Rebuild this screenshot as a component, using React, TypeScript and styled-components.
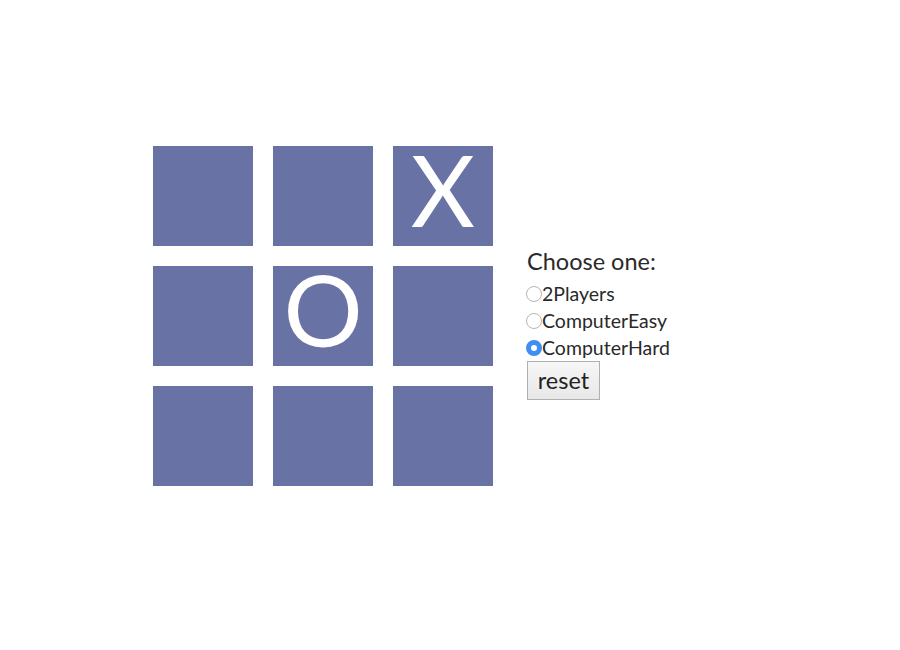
import React, { useState } from 'react';
import styled, { createGlobalStyle } from 'styled-components';

const GlobalStyle = createGlobalStyle`
  body {
    margin: 0;
    background: #ffffff;
    font-family: Lato, "Open Sans", sans-serif;
    color: #222222;
  }
`;

const Page = styled.div`
  display: flex;
  align-items: center;
  padding: 146px 0 0 153px;
`;

const Board = styled.div`
  display: grid;
  grid-template-columns: repeat(3, 100px);
  grid-template-rows: repeat(3, 100px);
  gap: 20px;
`;

const Cell = styled.div`
  background: #6872a5;
  color: #ffffff;
  display: flex;
  align-items: center;
  justify-content: center;
  padding-bottom: 16px;
  box-sizing: border-box;
  font-family: Lato, "Open Sans", sans-serif;
  font-size: 99px;
  font-weight: 400;
  line-height: 1;
`;

const Panel = styled.div`
  display: flex;
  flex-direction: column;
  align-items: flex-start;
  margin: 16px 0 0 34px;
`;

const Title = styled.div`
  font-size: 23.5px;
  line-height: 26px;
  margin-bottom: 6px;
  color: #2a2a2a;
`;

const Option = styled.label`
  display: flex;
  align-items: center;
  font-size: 19.5px;
  height: 27px;
  color: #2a2a2a;
`;

const Radio = styled.input`
  appearance: none;
  margin: 0 0 0 -1px;
  width: 16px;
  height: 16px;
  border-radius: 50%;
  border: 1px solid #b5b5b5;
  background: #ffffff;
  box-sizing: border-box;

  &:checked {
    border: 5px solid #3d8ff2;
    background: #ffffff;
  }
`;

const ResetButton = styled.button`
  margin-top: 0;
  font-family: Lato, "Open Sans", sans-serif;
  font-size: 23.5px;
  color: #222222;
  padding: 2px 9px 4px;
  height: 39px;
  width: 73px;
  background: linear-gradient(#f6f6f6, #e8e8e8);
  border: 1px solid #b0b0b0;
  border-radius: 0;
`;

const cells = ['', '', 'X', '', 'O', '', '', '', ''];
const modes = ['2Players', 'ComputerEasy', 'ComputerHard'];

export default function App() {
  const [mode, setMode] = useState('ComputerHard');
  return (
    <>
      <GlobalStyle />
      <Page>
        <Board>
          {cells.map((c, i) => (
            <Cell key={i}>{c}</Cell>
          ))}
        </Board>
        <Panel>
          <Title>Choose one:</Title>
          {modes.map((m) => (
            <Option key={m}>
              <Radio
                type="radio"
                name="mode"
                checked={mode === m}
                onChange={() => setMode(m)}
              />
              {m}
            </Option>
          ))}
          <ResetButton>reset</ResetButton>
        </Panel>
      </Page>
    </>
  );
}
